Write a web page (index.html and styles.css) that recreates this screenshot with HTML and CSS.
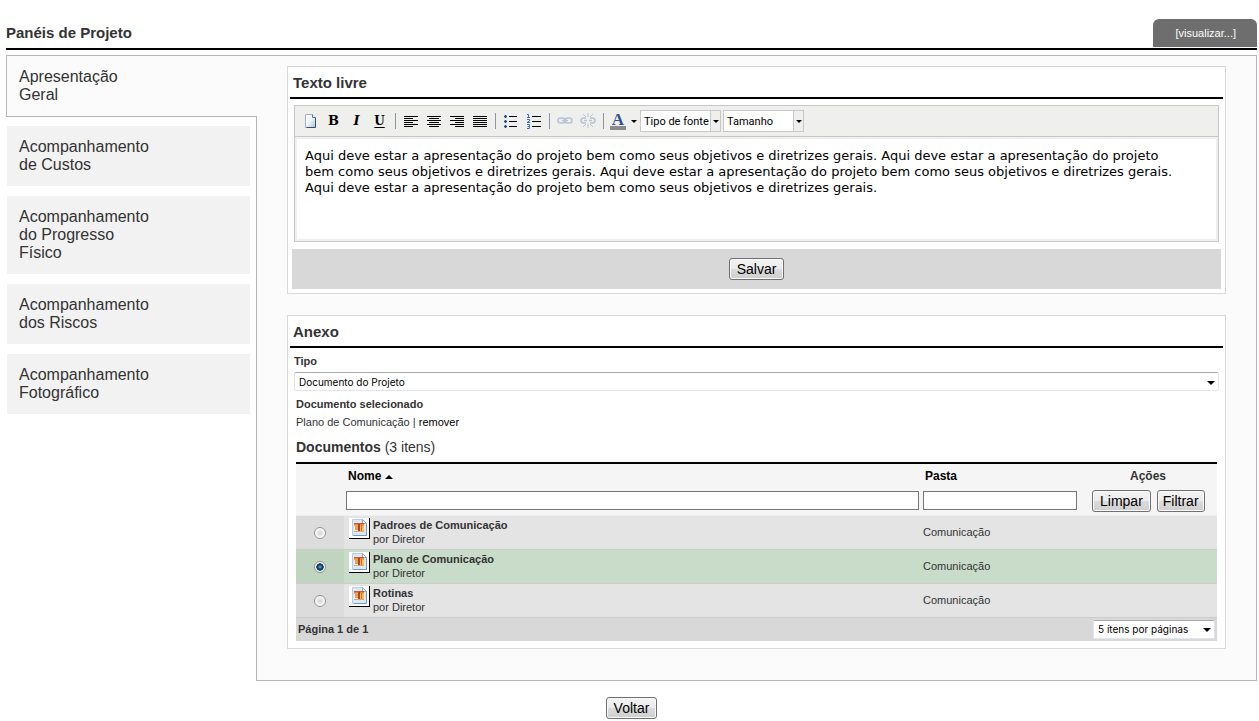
FILE: index.html
```html
<!DOCTYPE html>
<html lang="pt-BR">
<head>
<meta charset="utf-8">
<title>Panéis de Projeto</title>
<link rel="stylesheet" href="styles.css">
</head>
<body>
<svg class="defs" width="0" height="0" aria-hidden="true">
  <defs>
    <linearGradient id="page" x1="0" y1="0" x2="1" y2="1"><stop offset="0" stop-color="#fff"/><stop offset="0.5" stop-color="#eef3f8"/><stop offset="1" stop-color="#a9bfd4"/></linearGradient>
    <linearGradient id="sunset" x1="0" y1="0" x2="0" y2="1"><stop offset="0" stop-color="#c9401c"/><stop offset="0.5" stop-color="#f0842c"/><stop offset="1" stop-color="#f7b35c"/></linearGradient>
    <symbol id="doc" viewBox="0 0 18 18">
      <path d="M2.500 1.500h10l4 4v12h-14z" fill="#dbe8f8" stroke="#b4cbec"/>
      <path d="M16.500 5v12.500h-13" fill="none" stroke="#6f97d0"/>
      <path d="M12.500 1.500v4h4z" fill="#fff" stroke="#86a9d8"/>
      <path d="M4 5h10v9H4z" fill="#fdf1e4"/>
      <path d="M4 5h10v3H4z" fill="url(#sunset)"/>
      <path d="M5 8h3v4H5z" fill="#f39a60"/>
      <path d="M8 6h2v7H8z" fill="#9c4a34"/>
      <path d="M10 8h4v5h-4z" fill="#ffc04a"/>
      <path d="M11 7h1v6h-1z" fill="#d9652a"/>
      <path d="M4 13h10v1H4z" fill="#e9a26c"/>
    </symbol>
  </defs>
</svg>
<header class="top">
  <h1 class="title">Panéis de Projeto</h1>
  <a class="view" href="#">[visualizar...]</a>
</header>
<div class="layout">
  <nav class="tabs">
    <a class="tab active" href="#">Apresentação Geral</a>
    <a class="tab" href="#">Acompanhamento de Custos</a>
    <a class="tab" href="#">Acompanhamento do Progresso Físico</a>
    <a class="tab" href="#">Acompanhamento dos Riscos</a>
    <a class="tab" href="#">Acompanhamento Fotográfico</a>
  </nav>
  <main class="main">
    <section class="panel">
      <h2 class="title heading">Texto livre</h2>
      <div class="editor">
        <div class="toolbar">
          <button class="tool" aria-label="Nova página"><svg width="16" height="16"><path d="M2.500 1.500h7l3 3v10h-10z" fill="url(#page)" stroke="#9fb4ca"/><path d="M12.500 4.500v10h-9" fill="none" stroke="#34506e"/><path d="M9.500 1.500v3h3" fill="#fff" stroke="#5a7694"/></svg></button>
          <button class="tool bold" aria-label="Negrito">B</button>
          <button class="tool italic" aria-label="Itálico">I</button>
          <button class="tool under" aria-label="Sublinhado">U</button>
          <span class="sep"></span>
          <button class="tool" aria-label="Alinhar à esquerda"><svg width="16" height="16"><path d="M1 3.500h14M1 5.500h9M1 7.500h14M1 9.500h9M1 11.500h14M1 13.500h9" stroke="#000"/></svg></button>
          <button class="tool" aria-label="Centralizar"><svg width="16" height="16"><path d="M1 3.500h14M3 5.500h10M1 7.500h14M3 9.500h10M1 11.500h14M3 13.500h10" stroke="#000"/></svg></button>
          <button class="tool" aria-label="Alinhar à direita"><svg width="16" height="16"><path d="M1 3.500h14M6 5.500h9M1 7.500h14M6 9.500h9M1 11.500h14M6 13.500h9" stroke="#000"/></svg></button>
          <button class="tool" aria-label="Justificar"><svg width="16" height="16"><path d="M1 3.500h14M1 5.500h14M1 7.500h14M1 9.500h14M1 11.500h14M1 13.500h14" stroke="#000"/></svg></button>
          <span class="sep"></span>
          <button class="tool" aria-label="Lista"><svg width="16" height="16"><path d="M6 3.500h8M6 8.500h8M6 13.500h8" stroke="#000"/><path d="M1 2h3v3H1zM1 7h3v3H1zM1 12h3v3H1z" fill="#9db4dc"/><path d="M2 2h1v3H2zM1 3h3v1H1zM2 7h1v3H2zM1 8h3v1H1zM2 12h1v3H2zM1 13h3v1H1z" fill="#284b8c"/></svg></button>
          <button class="tool" aria-label="Lista numerada"><svg width="16" height="16"><path d="M6 3.500h9M6 8.500h9M6 13.500h9" stroke="#000"/><path d="M1 1.500h1.500v3M1 4.500h3M1 6.500h2.500v1.500L1 9.500h3M1 11.500h2.500v4H1M1.500 13.500h2" fill="none" stroke="#3e6bd0"/></svg></button>
          <span class="sep"></span>
          <button class="tool" aria-label="Inserir link"><svg width="16" height="16" fill="none" stroke="#b7c2d2" stroke-width="1.500"><rect x="1" y="5" width="7" height="5" rx="2.500"/><rect x="8" y="5" width="7" height="5" rx="2.500"/><path d="M5 7.500h6"/></svg></button>
          <button class="tool" aria-label="Remover link"><svg width="16" height="16" fill="none" stroke="#b7c2d2" stroke-width="1.500"><path d="M6 5H3.500a2.500 2.500 0 0 0 0 5H6M10 5h2.500a2.500 2.500 0 0 1 0 5H10M4 7.500h3M9 7.500h3"/><path d="M8 0v4M3 1l3 3M13 1l-3 3M8 11v4M3 14l3-3M13 14l-3-3" stroke-width="1"/></svg></button>
          <span class="sep"></span>
          <button class="color" aria-label="Cor do texto"><span class="letter">A</span><span class="arrow"></span></button>
          <span class="pick boxed"><select class="select small" aria-label="Tipo de fonte"><option>Tipo de fonte</option></select></span>
          <span class="pick boxed"><select class="select small" aria-label="Tamanho"><option>Tamanho</option></select></span>
        </div>
        <textarea class="text" aria-label="Texto livre">Aqui deve estar a apresentação do projeto bem como seus objetivos e diretrizes gerais. Aqui deve estar a apresentação do projeto bem como seus objetivos e diretrizes gerais. Aqui deve estar a apresentação do projeto bem como seus objetivos e diretrizes gerais. Aqui deve estar a apresentação do projeto bem como seus objetivos e diretrizes gerais.</textarea>
      </div>
      <div class="actions"><button class="btn">Salvar</button></div>
    </section>
    <section class="panel">
      <h2 class="title heading">Anexo</h2>
      <div class="field">
        <label class="label" for="tipo">Tipo</label>
        <span class="pick"><select class="select wide" id="tipo"><option>Documento do Projeto</option></select></span>
      </div>
      <div class="docs">
        <h3 class="label">Documento selecionado</h3>
        <p class="chosen">Plano de Comunicação | <a class="remove" href="#">remover</a></p>
        <h3 class="caption">Documentos <span class="count">(3 itens)</span></h3>
        <table class="table">
          <colgroup><col class="c-radio"><col><col class="c-folder"><col class="c-act"></colgroup>
          <thead>
            <tr class="names"><th></th><th>Nome <span class="up"></span></th><th>Pasta</th><th class="center">Ações</th></tr>
            <tr class="filters"><td></td><td><input class="input" type="text" aria-label="Filtrar por nome"></td><td><input class="input" type="text" aria-label="Filtrar por pasta"></td><td><div class="pair"><button class="btn">Limpar</button><button class="btn snug">Filtrar</button></div></td></tr>
          </thead>
          <tbody>
            <tr class="row"><td class="cell-radio"><input class="radio" type="radio" name="doc" id="d1"></td><td><label class="doc" for="d1"><svg class="thumb" width="21" height="21"><use href="#doc" x="1" y="0" width="18" height="18"/></svg><span><b>Padroes de Comunicação</b><br>por Diretor</span></label></td><td>Comunicação</td><td></td></tr>
            <tr class="row selected"><td class="cell-radio"><input class="radio" type="radio" name="doc" id="d2" checked></td><td><label class="doc" for="d2"><svg class="thumb" width="21" height="21"><use href="#doc" x="1" y="0" width="18" height="18"/></svg><span><b>Plano de Comunicação</b><br>por Diretor</span></label></td><td>Comunicação</td><td></td></tr>
            <tr class="row"><td class="cell-radio"><input class="radio" type="radio" name="doc" id="d3"></td><td><label class="doc" for="d3"><svg class="thumb" width="21" height="21"><use href="#doc" x="1" y="0" width="18" height="18"/></svg><span><b>Rotinas</b><br>por Diretor</span></label></td><td>Comunicação</td><td></td></tr>
          </tbody>
        </table>
        <div class="pager"><b>Página 1 de 1</b><span class="pick"><select class="select per" aria-label="Itens por página"><option>5 ítens por páginas</option></select></span></div>
      </div>
    </section>
  </main>
</div>
<footer class="bottom"><button class="btn">Voltar</button></footer>
</body>
</html>
```
FILE: styles.css
```css
* { box-sizing: border-box; }
body {
  margin: 0;
  padding: 19px 2px 2px 6px;
  background: #fff;
  color: #333;
  font: 11px/14px "Liberation Sans", Arial, sans-serif;
}
.defs { display: block; height: 0; }
h1, h2, h3, p { margin: 0; }
a { color: inherit; text-decoration: none; }
button, input, select, textarea { font-family: inherit; margin: 0; }

.top {
  display: flex;
  justify-content: space-between;
  align-items: center;
  border-bottom: 2px solid #000;
  padding-bottom: 1px;
}
.title { font-size: 15px; line-height: 18px; font-weight: bold; }
.view {
  padding: 7px 21px 7px 22px;
  border-radius: 6px 6px 0 0;
  background: #6e6e6e;
  color: #fff;
}

.layout { display: flex; margin-top: 5px; }
.tabs {
  display: flex;
  flex-direction: column;
  gap: 10px;
  width: 250px;
  flex: none;
}
.tab {
  margin: 0 6px 0 1px;
  padding: 12px 90px 12px 12px;
  background: #f2f2f2;
  font-size: 16px;
  line-height: 18px;
}
.tab.active {
  position: relative;
  margin: 0 -1px -1px 0;
  padding-right: 100px;
  border: 1px solid #b5b5b5;
  border-right: 0;
  background: #fbfbfb;
}
.main {
  flex: 1;
  min-width: 0;
  display: flex;
  flex-direction: column;
  gap: 21px;
  padding: 10px 30px 31px;
  border: 1px solid #b5b5b5;
  background: #fbfbfb;
}
.panel { border: 1px solid #d8d8d8; background: #fff; padding: 0 2px 4px; }
.heading { padding: 7px 3px 5px; border-bottom: 2px solid #000; }

.editor { margin: 6px 4px 7px; border: 1px solid #c8c8c8; background: #efefed; }
.toolbar {
  display: flex;
  align-items: center;
  height: 31px;
  padding-left: 4px;
  border-bottom: 1px solid #c8c8c8;
}
.tool, .color {
  display: flex;
  align-items: center;
  justify-content: center;
  width: 23px;
  height: 22px;
  padding: 0;
  border: 0;
  background: none;
  color: #000;
}
.tool { font: bold 13px/16px "DejaVu Serif", serif; }
.tool.bold { font-weight: 900; }
.tool.italic { font-style: italic; }
.tool.under { font-size: 12px; text-decoration: underline; text-underline-offset: 2px; }
.sep { width: 1px; height: 16px; margin: 0 3px 0 4px; background: #8c95a0; }
.color { width: 33px; gap: 5px; }
.letter {
  width: 16px;
  border-bottom: 4px solid #8b8b8b;
  color: #2f5496;
  font: bold 17px/13px "Liberation Serif", serif;
}
.arrow { border: 3px solid transparent; border-top-color: #000; border-bottom: 0; }

.pick { display: grid; align-items: center; }
.pick > .select { grid-area: 1 / 1; }
.pick::after {
  content: "";
  grid-area: 1 / 1;
  justify-self: end;
  margin: 2px 4px 0 0;
  border: 4px solid transparent;
  border-top-color: #000;
  border-bottom: 0;
  pointer-events: none;
}
.select {
  appearance: none;
  height: 19px;
  padding: 0 4px;
  border: 1px solid #e0e4ec;
  border-top-color: #a9abb2;
  border-radius: 2px;
  background: #fff;
  color: #000;
  font: 10px Inter, sans-serif;
}
.select.wide { width: 100%; }
.select.per { width: 122px; }
.boxed { margin-right: 2px; }
.select.small {
  width: 81px;
  height: 22px;
  padding: 0 3px;
  border-color: #c8c8c8;
  border-radius: 0;
  background: linear-gradient(#c8c8c8, #c8c8c8) right 9px top / 1px 100% no-repeat,
    linear-gradient(#efefed, #efefed) right / 9px 100% no-repeat, #fff;
  font: 11px Roboto, sans-serif;
}
.pick.boxed::after { margin: 0 2px 0 0; border-width: 3px 3px 0; }
.text {
  display: block;
  width: 100%;
  height: 104px;
  padding: 9px 30px 9px 8px;
  border: 2px solid #efefed;
  outline: 0;
  resize: none;
  background: #fff;
  color: #000;
  font: 13px/16px "DejaVu Sans", Verdana, sans-serif;
}
.actions {
  display: flex;
  justify-content: center;
  align-items: center;
  height: 40px;
  margin: 0 2px;
  background: #d8d8d8;
}
.btn {
  height: 22px;
  padding: 0 7px;
  border: 1px solid #707070;
  border-radius: 3px;
  background: linear-gradient(#f3f3f3, #ebebeb 50%, #dcdcdc 50%, #cfcfcf);
  box-shadow: inset 0 0 0 1px #fafafa;
  color: #000;
  font-size: 14px;
  line-height: 16px;
}
.btn.snug { padding: 0 5px; }

.field { display: grid; gap: 4px; padding: 6px 4px; }
.label { font-size: 11px; line-height: 14px; font-weight: bold; }
.docs { padding: 0 6px 3px; }
.chosen { padding: 4px 0 9px; }
.remove { color: #000; }
.caption { font-size: 14px; line-height: 18px; padding-bottom: 6px; }
.count { font-weight: normal; }
.table {
  width: 100%;
  table-layout: fixed;
  border-collapse: collapse;
  border-top: 2px solid #000;
}
.c-radio { width: 48px; }
.c-folder { width: 158px; }
.c-act { width: 138px; }
.table th, .table td { padding: 0 2px; text-align: left; }
.names th { height: 24px; padding: 0 4px; color: #000; font-size: 12px; }
.table .center { text-align: center; color: #333; }
.names, .filters { background: #f5f5f5; }
.filters td { height: 28px; }
.up {
  display: inline-block;
  border: 4px solid transparent;
  border-bottom-color: #000;
  border-top: 0;
  vertical-align: 1px;
}
.input { display: block; width: 100%; height: 19px; border: 1px solid #767676; background: #fff; }
.pair { display: flex; gap: 6px; padding-left: 11px; }
.row { background: #e4e4e4; border-top: 1px solid #efefef; border-bottom: 1px solid #ccc; }
.row td { height: 34px; }
.row .cell-radio { background: #dcdcdc; text-align: center; }
.row.selected { background: #c9dcc9; }
.row.selected .cell-radio { background: #c0d4c0; }
.radio {
  appearance: none;
  display: block;
  width: 12px;
  height: 12px;
  margin: 2px auto 0;
  border: 1px solid #8e8f8f;
  border-radius: 50%;
  background: radial-gradient(#d0d0d0, #eee 45%, #fff 70%);
}
.radio:checked { background: radial-gradient(circle, #6cc4ec, #145a86 25%, #0b2c48 48%, #fff 56%); }
.doc { display: flex; gap: 3px; padding-left: 3px; }
.thumb { display: block; background: #fff; border-right: 1px solid #000; border-bottom: 1px solid #000; }
.pager {
  display: flex;
  justify-content: space-between;
  align-items: center;
  height: 23px;
  padding: 0 2px;
  background: #d8d8d8;
}
.bottom { display: flex; justify-content: center; padding-top: 16px; }
```
